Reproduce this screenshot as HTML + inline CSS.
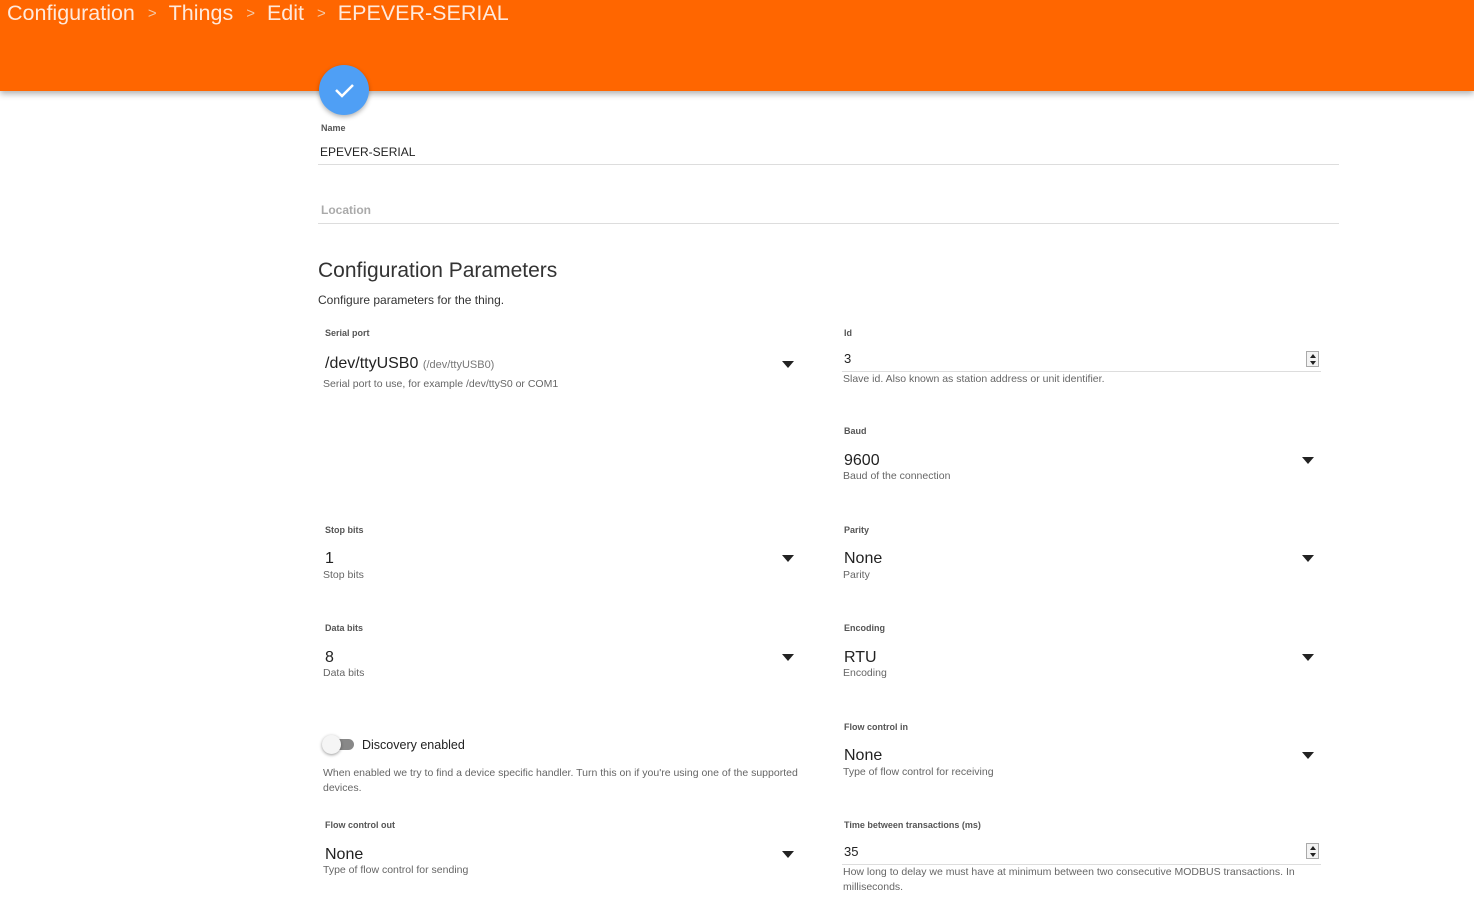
<!DOCTYPE html>
<html><head><meta charset="utf-8"><style>
*{margin:0;padding:0;box-sizing:border-box}
body{width:1474px;height:910px;background:#fff;font-family:"Liberation Sans",sans-serif;position:relative;overflow:hidden;color:#222}
.hdr{position:absolute;left:0;top:0;width:1474px;height:91px;background:#ff6600;box-shadow:0 3px 6px rgba(0,0,0,.3)}
.bc{position:absolute;left:7px;top:1px;font-size:21.5px;white-space:nowrap;color:#ffe9dc}
.bc .s{display:inline-block;margin:0 12px 0 13px;font-size:15px;color:#f3c9a8;position:relative;top:-2px}
.fab{position:absolute;left:319px;top:65px;width:50px;height:50px;border-radius:50%;background:#4f9ff5;box-shadow:0 2px 5px rgba(0,0,0,.3)}
.a{position:absolute;white-space:nowrap}
.lbl{font-size:9px;font-weight:bold;color:#555}
.val{font-size:16px;color:#222}
.hint{font-size:10.5px;color:#666}
.line{position:absolute;height:1px;background:#ddd}
.arr{position:absolute;width:0;height:0;border-left:6px solid transparent;border-right:6px solid transparent;border-top:7px solid #222}
.spin{position:absolute;width:13px;height:16px;border:1px solid #aaa;background:#f3f3f3}
.spin:before{content:"";position:absolute;left:3px;top:2px;border-left:3px solid transparent;border-right:3px solid transparent;border-bottom:4px solid #222}
.spin:after{content:"";position:absolute;left:3px;top:9px;border-left:3px solid transparent;border-right:3px solid transparent;border-top:4px solid #222}
</style></head><body>
<div class="hdr"><div class="bc">Configuration<span class="s">&gt;</span>Things<span class="s">&gt;</span>Edit<span class="s">&gt;</span>EPEVER-SERIAL</div></div>
<div class="fab"><svg width="50" height="50"><path d="M17 25 l6 6 l11 -11" fill="none" stroke="#fff" stroke-width="2.5"/></svg></div>

<div class="a lbl" style="left:321px;top:123px">Name</div>
<div class="a" style="left:320px;top:145px;font-size:12px">EPEVER-SERIAL</div>
<div class="line" style="left:318px;top:164px;width:1021px"></div>
<div class="a" style="left:321px;top:203px;font-size:12px;color:#aaa;font-weight:bold">Location</div>
<div class="line" style="left:318px;top:223px;width:1021px"></div>

<div class="a" style="left:318px;top:259px;font-size:21px;color:#333">Configuration Parameters</div>
<div class="a" style="left:318px;top:293px;font-size:12px;color:#333">Configure parameters for the thing.</div>

<div class="a lbl" style="left:325px;top:328px">Serial port</div>
<div class="a val" style="left:325px;top:355px">/dev/ttyUSB0 <span style="font-size:11px;color:#777">(/dev/ttyUSB0)</span></div>
<div class="arr" style="left:782px;top:361px"></div>
<div class="a hint" style="left:323px;top:378px">Serial port to use, for example /dev/ttyS0 or COM1</div>

<div class="a lbl" style="left:844px;top:328px">Id</div>
<div class="a" style="left:844px;top:351px;font-size:13px">3</div>
<div class="spin" style="left:1306px;top:351px"></div>
<div class="line" style="left:842px;top:371px;width:479px"></div>
<div class="a hint" style="left:843px;top:373px">Slave id. Also known as station address or unit identifier.</div>

<div class="a lbl" style="left:844px;top:426px">Baud</div>
<div class="a val" style="left:844px;top:452px">9600</div>
<div class="arr" style="left:1302px;top:457px"></div>
<div class="a hint" style="left:843px;top:470px">Baud of the connection</div>

<div class="a lbl" style="left:325px;top:525px">Stop bits</div>
<div class="a val" style="left:325px;top:550px">1</div>
<div class="arr" style="left:782px;top:555px"></div>
<div class="a hint" style="left:323px;top:569px">Stop bits</div>

<div class="a lbl" style="left:844px;top:525px">Parity</div>
<div class="a val" style="left:844px;top:550px">None</div>
<div class="arr" style="left:1302px;top:555px"></div>
<div class="a hint" style="left:843px;top:569px">Parity</div>

<div class="a lbl" style="left:325px;top:623px">Data bits</div>
<div class="a val" style="left:325px;top:649px">8</div>
<div class="arr" style="left:782px;top:654px"></div>
<div class="a hint" style="left:323px;top:667px">Data bits</div>

<div class="a lbl" style="left:844px;top:623px">Encoding</div>
<div class="a val" style="left:844px;top:649px">RTU</div>
<div class="arr" style="left:1302px;top:654px"></div>
<div class="a hint" style="left:843px;top:667px">Encoding</div>

<div class="a" style="left:327px;top:739px;width:27px;height:11px;border-radius:6px;background:#888"></div>
<div class="a" style="left:322px;top:735px;width:19px;height:19px;border-radius:50%;background:#f5f5f5;box-shadow:0 1px 3px rgba(0,0,0,.4)"></div>
<div class="a" style="left:362px;top:738px;font-size:12.5px;color:#222">Discovery enabled</div>
<div class="a hint" style="left:323px;top:766px;line-height:15px">When enabled we try to find a device specific handler. Turn this on if you're using one of the supported<br>devices.</div>

<div class="a lbl" style="left:844px;top:722px">Flow control in</div>
<div class="a val" style="left:844px;top:747px">None</div>
<div class="arr" style="left:1302px;top:752px"></div>
<div class="a hint" style="left:843px;top:766px">Type of flow control for receiving</div>

<div class="a lbl" style="left:325px;top:820px">Flow control out</div>
<div class="a val" style="left:325px;top:846px">None</div>
<div class="arr" style="left:782px;top:851px"></div>
<div class="a hint" style="left:323px;top:864px">Type of flow control for sending</div>

<div class="a lbl" style="left:844px;top:820px">Time between transactions (ms)</div>
<div class="a" style="left:844px;top:844px;font-size:13px">35</div>
<div class="spin" style="left:1306px;top:843px"></div>
<div class="line" style="left:842px;top:864px;width:479px"></div>
<div class="a hint" style="left:843px;top:865px;line-height:15px">How long to delay we must have at minimum between two consecutive MODBUS transactions. In<br>milliseconds.</div>
</body></html>
